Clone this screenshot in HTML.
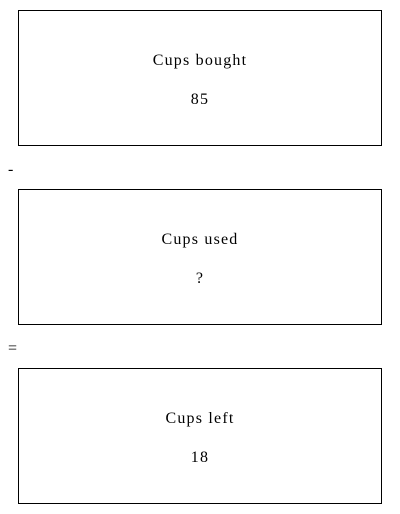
<!DOCTYPE html>
<html><head><style>
body{margin:0;background:#fff;width:400px;height:514px;position:relative;font-family:"Liberation Serif",serif;font-size:16px;color:#000}
.b{position:absolute;left:18px;width:362px;height:134px;border:1px solid #000}
.t{position:absolute;left:0;right:0;text-align:center;line-height:18px;letter-spacing:1.2px}
.s{position:absolute;left:8px;line-height:18px}
</style></head><body>
<div class="b" style="top:10px"><div class="t" style="top:41px">Cups bought</div><div class="t" style="top:80px">85</div></div>
<div class="s" style="top:161px">-</div>
<div class="b" style="top:189px"><div class="t" style="top:41px">Cups used</div><div class="t" style="top:80px">?</div></div>
<div class="s" style="top:340px">=</div>
<div class="b" style="top:368px"><div class="t" style="top:41px">Cups left</div><div class="t" style="top:80px">18</div></div>
</body></html>
